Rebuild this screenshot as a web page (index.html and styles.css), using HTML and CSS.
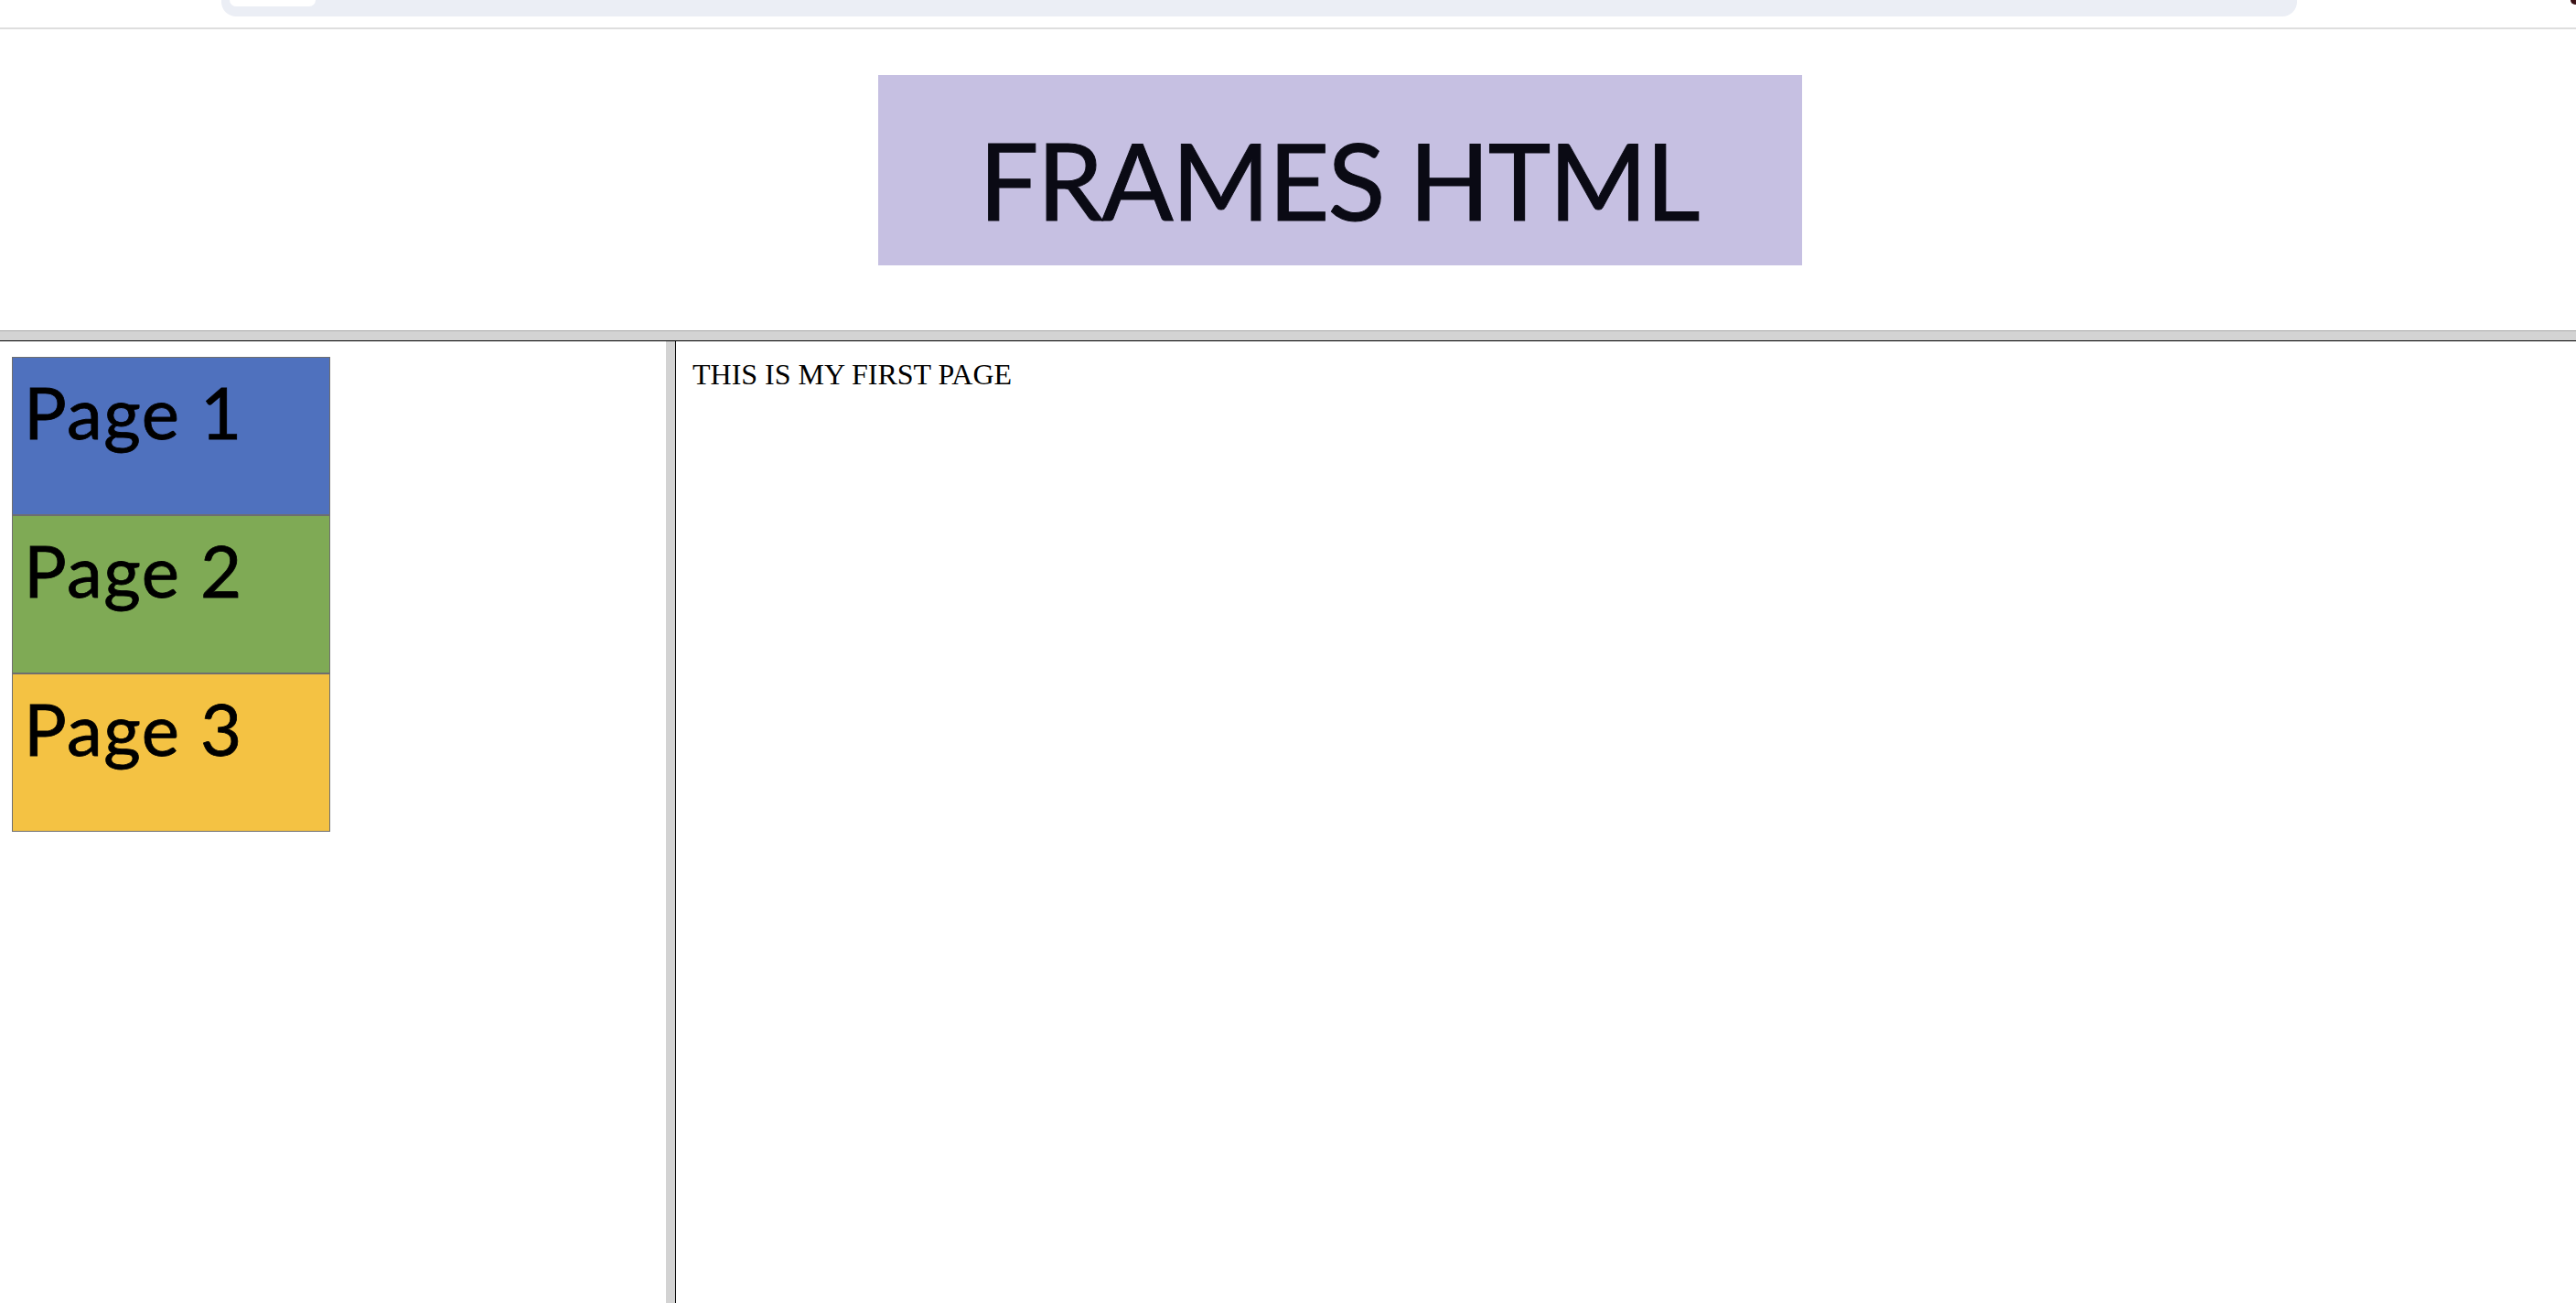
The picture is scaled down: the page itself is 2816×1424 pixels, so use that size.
FILE: index.html
```html
<!DOCTYPE html>
<html lang="en">
<head>
<meta charset="utf-8">
<title>Frames HTML</title>
<link rel="stylesheet" href="styles.css">
</head>
<body>
  <div class="chrome">
    <div class="pill"><div class="tab"></div></div>
    <span class="corner-mark"></span>
  </div>
  <div class="top-frame">
    <div class="banner">FRAMES HTML</div>
  </div>
  <div class="h-divider"></div>
  <div class="bottom">
    <div class="left-frame">
      <div class="page-btn blue">Page 1</div>
      <div class="page-btn green">Page 2</div>
      <div class="page-btn yellow">Page 3</div>
    </div>
    <div class="v-divider"></div>
    <div class="right-frame">
      <p class="content-text">THIS IS MY FIRST PAGE</p>
    </div>
  </div>
</body>
</html>
```

FILE: styles.css
```css
html, body {
  margin: 0;
  padding: 0;
  background: #ffffff;
}
body {
  width: 2816px;
  height: 1424px;
  overflow: hidden;
  display: flex;
  flex-direction: column;
  font-family: "Liberation Serif", "Times New Roman", serif;
}

.chrome {
  position: relative;
  height: 30px;
  border-bottom: 2px solid #dedede;
  flex: none;
}
.pill {
  margin-left: 242px;
  width: 2269px;
  height: 18px;
  background: #ebeef5;
  border-radius: 0 0 16px 16px;
  padding-left: 9px;
  box-sizing: border-box;
}
.tab {
  width: 94px;
  height: 7px;
  background: #ffffff;
  border-radius: 0 0 7px 7px;
}
.corner-mark {
  position: absolute;
  right: 0;
  top: 0;
  width: 6px;
  height: 5px;
  background: #3a1216;
  border-radius: 0 0 0 6px;
}

.top-frame {
  height: 329px;
  flex: none;
  padding: 50px 0 0 960px;
  box-sizing: border-box;
}
.banner {
  width: 1010px;
  height: 208px;
  box-sizing: border-box;
  background: #c6c0e2;
  font-family: Lato, "Noto Sans", sans-serif;
  font-size: 116px;
  line-height: 1;
  color: #0a0a14;
  padding: 57px 0 0 110px;
  letter-spacing: -2px;
  -webkit-text-stroke: 1px #0a0a14;
}

.h-divider {
  flex: none;
  height: 10px;
  background: #d3d3d3;
  border-top: 1px solid #a9a9a9;
  border-bottom: 1px solid #000000;
}

.bottom {
  flex: 1;
  display: flex;
  min-height: 0;
}
.left-frame {
  width: 728px;
  flex: none;
  padding: 17px 13px;
  box-sizing: border-box;
  display: flex;
  flex-direction: column;
}
.v-divider {
  width: 10px;
  flex: none;
  background: #d3d3d3;
  border-right: 1px solid #000000;
}
.right-frame {
  flex: 1;
  padding: 18px;
}

.page-btn {
  width: 348px;
  height: 173px;
  box-sizing: border-box;
  border: 1px solid #6e6e6e;
  font-family: Lato, "Noto Sans", sans-serif;
  font-size: 78px;
  line-height: 1;
  color: #000000;
  padding: 20px 0 0 12px;
  letter-spacing: 1.5px;
  -webkit-text-stroke: 0.8px #000000;
}
.blue { background: #4f71be; }
.green { background: #7faa55; }
.yellow { background: #f4c243; }

.content-text {
  margin: 0;
  font-size: 32px;
  color: #000000;
}
```
